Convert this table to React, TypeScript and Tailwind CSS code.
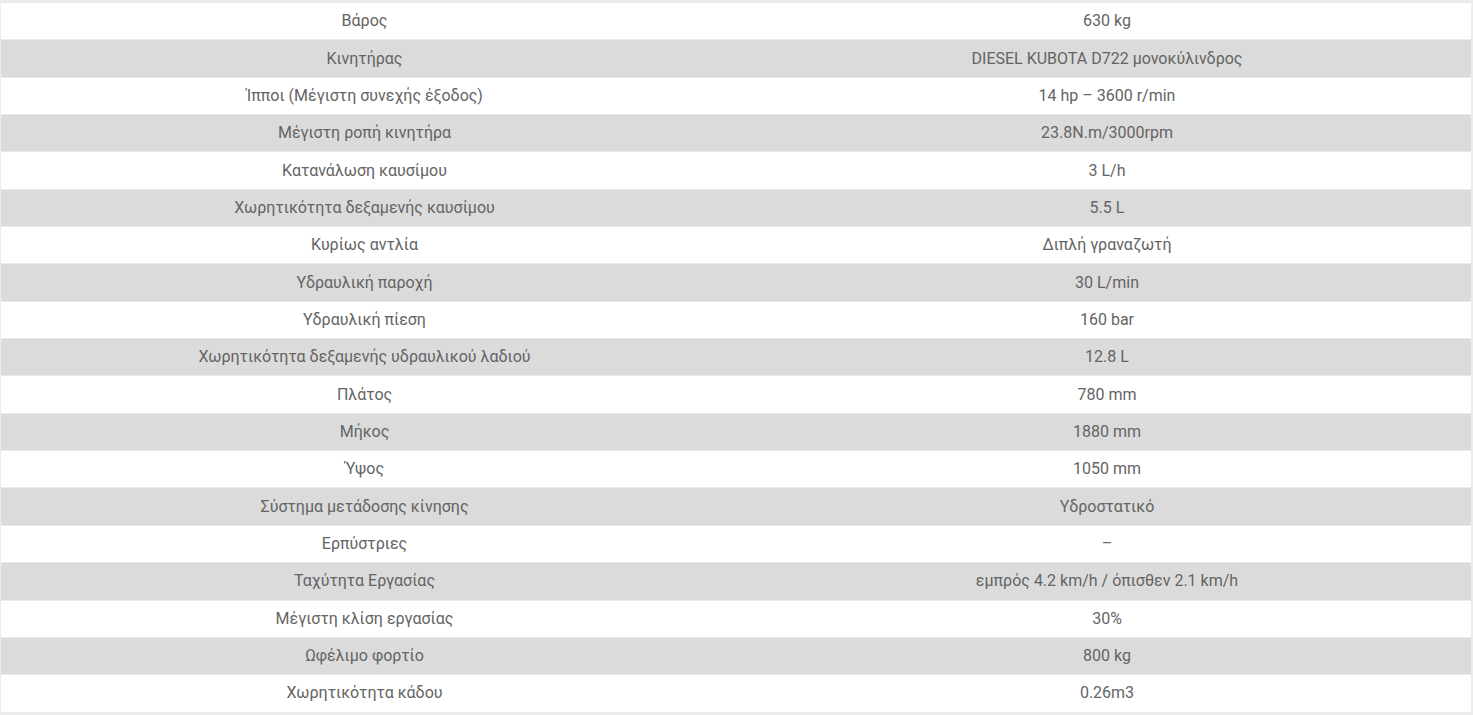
const specs: [string, string][] = [
  ['Βάρος', '630 kg'],
  ['Κινητήρας', 'DIESEL KUBOTA D722 μονοκύλινδρος'],
  ['Ίπποι (Μέγιστη συνεχής έξοδος)', '14 hp – 3600 r/min'],
  ['Μέγιστη ροπή κινητήρα', '23.8N.m/3000rpm'],
  ['Κατανάλωση καυσίμου', '3 L/h'],
  ['Χωρητικότητα δεξαμενής καυσίμου', '5.5 L'],
  ['Κυρίως αντλία', 'Διπλή γραναζωτή'],
  ['Υδραυλική παροχή', '30 L/min'],
  ['Υδραυλική πίεση', '160 bar'],
  ['Χωρητικότητα δεξαμενής υδραυλικού λαδιού', '12.8 L'],
  ['Πλάτος', '780 mm'],
  ['Μήκος', '1880 mm'],
  ['Ύψος', '1050 mm'],
  ['Σύστημα μετάδοσης κίνησης', 'Υδροστατικό'],
  ['Ερπύστριες', '–'],
  ['Ταχύτητα Εργασίας', 'εμπρός 4.2 km/h / όπισθεν 2.1 km/h'],
  ['Μέγιστη κλίση εργασίας', '30%'],
  ['Ωφέλιμο φορτίο', '800 kg'],
  ['Χωρητικότητα κάδου', '0.26m3'],
];

export default function App() {
  return (
    <div className="h-[715px] w-full bg-[#ebebeb] pl-px pr-[2px] pt-[3px] font-['Roboto',sans-serif] text-[16px] text-[#646464]">
      <div className="flex flex-col gap-px">
        {specs.map(([label, value], i) => (
          <div
            key={label}
            className={`grid h-[36.35px] grid-cols-[727px_1fr] items-center ${i % 2 === 0 ? 'bg-white' : 'bg-[#dbdbdb]'}`}
          >
            <div className="text-center">{label}</div>
            <div className="pl-[15px] text-center">{value}</div>
          </div>
        ))}
      </div>
    </div>
  );
}
